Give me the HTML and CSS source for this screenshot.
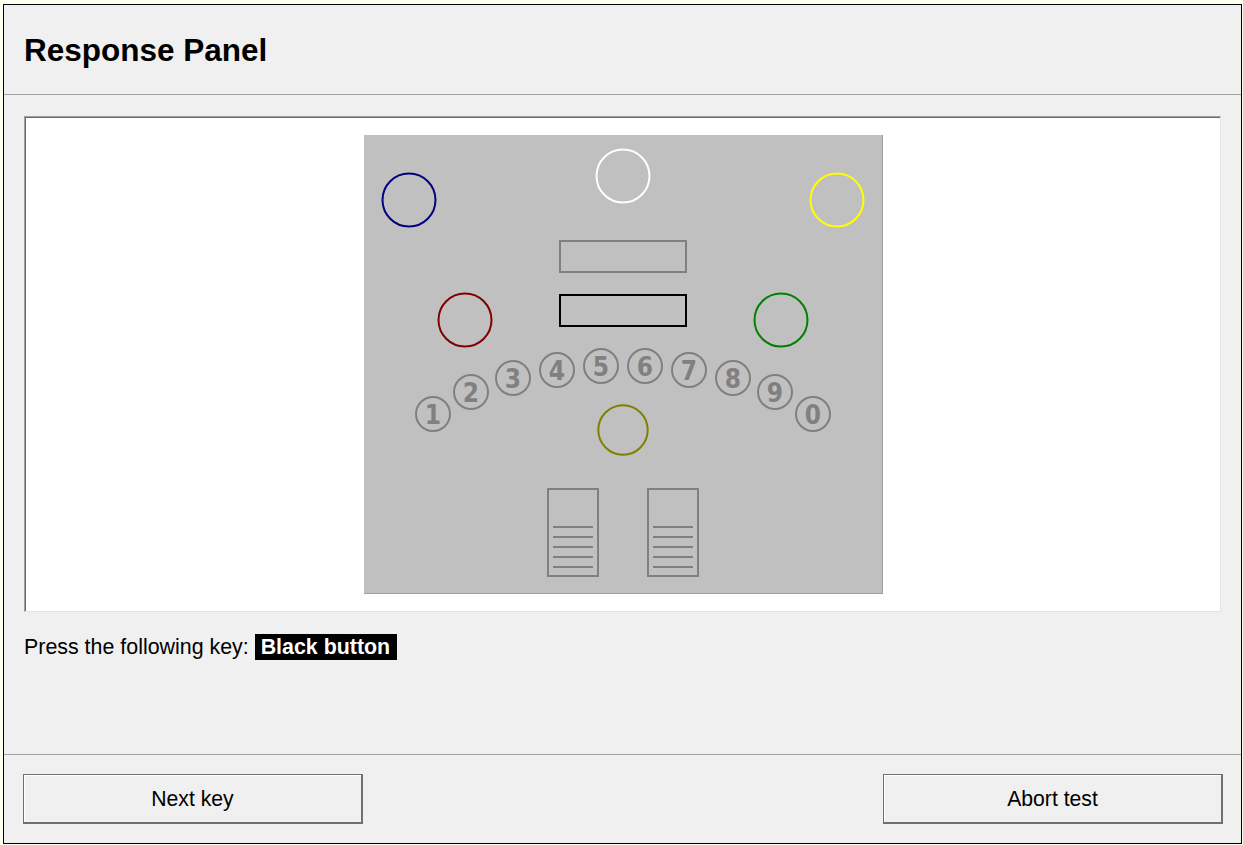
FILE: index.html
```html
<!DOCTYPE html>
<html>
<head>
<meta charset="utf-8">
<title>Response Panel</title>
<link rel="stylesheet" href="styles.css">
</head>
<body>
<div class="window">
  <header class="header">
    <h1 class="title">Response Panel</h1>
  </header>
  <main class="content">
    <div class="panel">
      <svg class="device" width="519" height="459" viewBox="0 0 519 459" xmlns="http://www.w3.org/2000/svg">
        <rect x="0" y="0" width="519" height="459" fill="#c0c0c0"/>
        <line x1="518.5" y1="0" x2="518.5" y2="459" stroke="#a0a0a0" stroke-width="1"/>
        <line x1="0" y1="458.5" x2="519" y2="458.5" stroke="#a0a0a0" stroke-width="1"/>
        <g fill="none" stroke-width="2">
          <circle cx="45" cy="65" r="26.5" stroke="#000080"/>
          <circle cx="259" cy="41" r="26.5" stroke="#ffffff"/>
          <circle cx="473" cy="65" r="26.5" stroke="#ffff00"/>
          <circle cx="101" cy="185" r="26.5" stroke="#800000"/>
          <circle cx="417" cy="185" r="26.5" stroke="#008000"/>
          <circle cx="259" cy="295" r="24.7" stroke="#808000"/>
          <rect x="196" y="106" width="126" height="31" stroke="#808080"/>
          <rect x="196" y="160" width="126" height="31" stroke="#000000"/>
        </g>
        <g fill="none" stroke="#808080" stroke-width="2">
          <circle cx="69" cy="279" r="17"/>
          <circle cx="107" cy="257" r="17"/>
          <circle cx="149" cy="243" r="17"/>
          <circle cx="193" cy="235" r="17"/>
          <circle cx="237" cy="231" r="17"/>
          <circle cx="281" cy="231" r="17"/>
          <circle cx="325" cy="235" r="17"/>
          <circle cx="369" cy="243" r="17"/>
          <circle cx="411" cy="257" r="17"/>
          <circle cx="449" cy="279" r="17"/>
        </g>
        <g class="digits" text-anchor="middle" fill="#808080">
          <text x="69" y="288.5">1</text>
          <text x="107" y="266.5">2</text>
          <text x="149" y="252.5">3</text>
          <text x="193" y="244.5">4</text>
          <text x="237" y="240.5">5</text>
          <text x="281" y="240.5">6</text>
          <text x="325" y="244.5">7</text>
          <text x="369" y="252.5">8</text>
          <text x="411" y="266.5">9</text>
          <text x="449" y="288.5">0</text>
        </g>
        <g fill="none" stroke="#808080" stroke-width="2">
          <rect x="184" y="354" width="50" height="87"/>
          <line x1="189" y1="392" x2="229" y2="392"/>
          <line x1="189" y1="402" x2="229" y2="402"/>
          <line x1="189" y1="412" x2="229" y2="412"/>
          <line x1="189" y1="422" x2="229" y2="422"/>
          <line x1="189" y1="432" x2="229" y2="432"/>
          <rect x="284" y="354" width="50" height="87"/>
          <line x1="289" y1="392" x2="329" y2="392"/>
          <line x1="289" y1="402" x2="329" y2="402"/>
          <line x1="289" y1="412" x2="329" y2="412"/>
          <line x1="289" y1="422" x2="329" y2="422"/>
          <line x1="289" y1="432" x2="329" y2="432"/>
        </g>
      </svg>
    </div>
    <p class="prompt">Press the following key: <span class="key">Black button</span></p>
  </main>
  <footer class="footer">
    <button class="btn">Next key</button>
    <button class="btn">Abort test</button>
  </footer>
</div>
</body>
</html>
```
FILE: styles.css
```css
html, body {
  margin: 0;
  padding: 0;
}
body {
  background: #fffff0;
  font-family: "Liberation Sans", Arial, sans-serif;
  color: #000;
}
.window {
  box-sizing: border-box;
  margin: 4px 0 0 3px;
  width: 1239px;
  height: 840px;
  border: 1px solid #000;
  background: #f0f0f0;
  display: flex;
  flex-direction: column;
}
.header {
  box-sizing: border-box;
  height: 90px;
  border-bottom: 1px solid #a0a0a0;
  display: flex;
  align-items: center;
  padding-left: 20px;
}
.title {
  margin: 0;
  font-size: 31.5px;
  font-weight: bold;
  line-height: 36px;
}
.content {
  flex: 1;
  padding: 21px 20px 0 20px;
  display: flex;
  flex-direction: column;
}
.panel {
  box-sizing: border-box;
  height: 496px;
  background: #fff;
  border-top: 1px solid #a0a0a0;
  border-left: 1px solid #a0a0a0;
  border-right: 1px solid #e3e3e3;
  border-bottom: 1px solid #e3e3e3;
  box-shadow: inset 1px 1px 0 #696969;
  display: flex;
  justify-content: center;
  padding-top: 18px;
  padding-left: 2px;
}
.device {
  display: block;
}
.digits {
  font-family: "DejaVu Sans Condensed", "DejaVu Sans", sans-serif;
  font-stretch: condensed;
  font-weight: bold;
  font-size: 26px;
}
.prompt {
  margin: 22px 0 0 0;
  font-size: 21.4px;
  line-height: 26px;
}
.key {
  display: inline-block;
  background: #000;
  color: #fff;
  font-weight: bold;
  padding: 0 7px 0 6px;
  line-height: 26px;
}
.footer {
  box-sizing: border-box;
  height: 89px;
  border-top: 1px solid #a0a0a0;
  display: flex;
  justify-content: space-between;
  align-items: flex-start;
  padding: 19px 18px 0 19px;
}
.btn {
  box-sizing: border-box;
  width: 340px;
  height: 50px;
  background: #f0f0f0;
  border-style: solid;
  border-color: #707070;
  border-width: 1px 2px 2px 1px;
  box-shadow: inset 1px 1px 0 #ffffff;
  font-family: "Liberation Sans", Arial, sans-serif;
  font-size: 21.2px;
  color: #000;
  padding: 0;
  margin: 0;
}
```
